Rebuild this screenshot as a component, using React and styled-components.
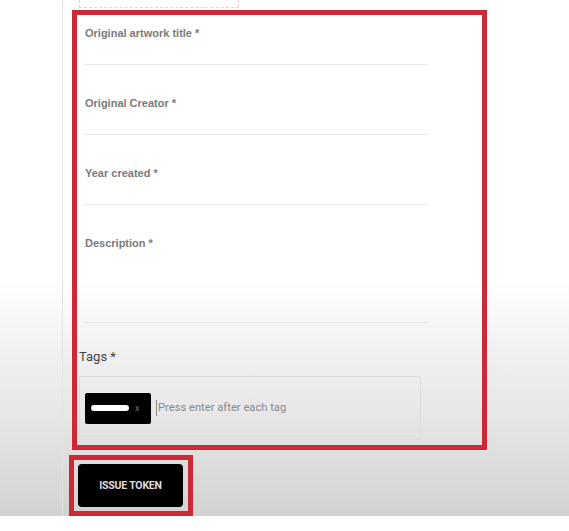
import React from "react"
import styled, { createGlobalStyle } from "styled-components"

const GlobalStyle = createGlobalStyle`
  html, body {
    margin: 0;
    padding: 0;
    background: #ffffff;
    font-family: Roboto, "Liberation Sans", sans-serif;
  }
`

const Page = styled.div`
  height: 516px;
  background: linear-gradient(
    to bottom,
    #ffffff 0px,
    #ffffff 280px,
    #f1f1f1 350px,
    #e4e4e4 430px,
    #d2d2d2 516px
  );
`

const Card = styled.div`
  margin-left: 62px;
  height: 100%;
  border-left: 1px solid #e3e3e7;
  display: flex;
  flex-direction: column;
  align-items: flex-start;
`

const DropZone = styled.div`
  margin-left: 16px;
  width: 160px;
  height: 8px;
  border: 1px dashed #efcfd2;
  border-top: none;
  box-sizing: border-box;
`

const Highlight = styled.div`
  margin-left: ${p => p.$left}px;
  margin-top: ${p => p.$top}px;
  width: ${p => p.$w}px;
  height: ${p => p.$h}px;
  border: 5px solid #cb2a35;
  box-sizing: border-box;
  display: flex;
  flex-direction: column;
`

const Fields = styled.div`
  padding: 11px 0 0 7px;
  display: flex;
  flex-direction: column;
`

const Field = styled.div`
  width: 344px;
  margin-bottom: ${p => p.$gap}px;
`

const Label = styled.div`
  padding-left: 1px;
  font-family: "Liberation Sans", Arial, sans-serif;
  font-size: 11px;
  line-height: 14px;
  font-weight: 700;
  color: #7a7a7a;
`

const Input = styled.div`
  height: ${p => p.$h}px;
  border-bottom: 1px solid #e8e8e8;
`

const TagsBlock = styled.div`
  padding-left: 2px;
  display: flex;
  flex-direction: column;
`

const TagsLabel = styled.div`
  font-size: 13px;
  line-height: 14px;
  color: #444444;
  margin-bottom: 12px;
`

const TagBox = styled.div`
  width: 342px;
  height: 64px;
  box-sizing: border-box;
  border: 1px solid #dcdcdc;
  border-radius: 2px;
  padding-left: 5px;
  display: flex;
  align-items: center;
`

const Chip = styled.div`
  width: 66px;
  height: 31px;
  background: #000000;
  border-radius: 2px;
  display: flex;
  align-items: center;
  padding-left: 6px;
  box-sizing: border-box;
  gap: 6px;
`

const Redacted = styled.span`
  width: 38px;
  height: 6px;
  background: #ffffff;
  border-radius: 3px;
`

const Remove = styled.span`
  font-size: 9px;
  color: #6f6f6f;
  line-height: 1;
`

const Placeholder = styled.div`
  margin-left: 5px;
  padding-left: 1px;
  border-left: 1px solid #8a8a8a;
  font-size: 11.2px;
  line-height: 16px;
  color: #8a8a8a;
`

const ButtonFrame = styled(Highlight)`
  padding: 4px;
`

const IssueButton = styled.button`
  width: 105px;
  height: 47px;
  background: #000000;
  border: none;
  border-radius: 4px;
  color: #dedede;
  font-family: Roboto, "Liberation Sans", sans-serif;
  font-size: 10.5px;
  font-weight: 700;
  letter-spacing: -0.2px;
  padding: 0;
`

const fields = [
  { label: "Original artwork title *", h: 24, gap: 31 },
  { label: "Original Creator *", h: 24, gap: 31 },
  { label: "Year created *", h: 24, gap: 31 },
  { label: "Description *", h: 72, gap: 27 },
]

export default function App() {
  return (
    <>
      <GlobalStyle />
      <Page>
        <Card>
          <DropZone />
          <Highlight $left={9} $top={2} $w={415} $h={440}>
            <Fields>
              {fields.map(f => (
                <Field key={f.label} $gap={f.gap}>
                  <Label>{f.label}</Label>
                  <Input $h={f.h} />
                </Field>
              ))}
            </Fields>
            <TagsBlock>
              <TagsLabel>Tags *</TagsLabel>
              <TagBox>
                <Chip>
                  <Redacted />
                  <Remove>x</Remove>
                </Chip>
                <Placeholder>Press enter after each tag</Placeholder>
              </TagBox>
            </TagsBlock>
          </Highlight>
          <ButtonFrame $left={6} $top={5} $w={124} $h={61}>
            <IssueButton>ISSUE TOKEN</IssueButton>
          </ButtonFrame>
        </Card>
      </Page>
    </>
  )
}
